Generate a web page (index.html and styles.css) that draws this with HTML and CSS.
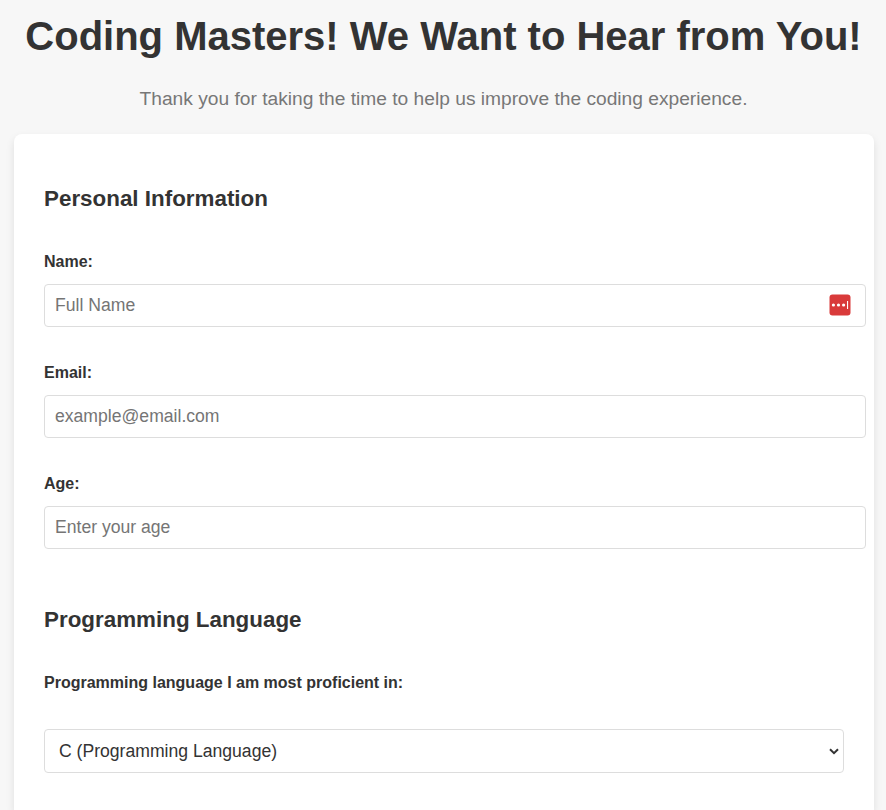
FILE: index.html
```html
<!DOCTYPE html>
<html lang="en">
<head>
<meta charset="utf-8">
<title>Coding Masters Survey</title>
<link rel="stylesheet" href="styles.css">
</head>
<body>
<header>
<h1>Coding Masters! We Want to Hear from You!</h1>
<p class="intro">Thank you for taking the time to help us improve the coding experience.</p>
</header>
<form class="survey">
<h2>Personal Information</h2>
<label for="name">Name:</label>
<div class="field">
<input id="name" type="text" placeholder="Full Name">
<svg class="badge" viewBox="0 0 22 22" width="22" height="22"><rect x=".5" y=".5" width="21" height="21" rx="3" fill="#d93a3a"/><g fill="#fff"><circle cx="4.4" cy="11" r="1.6"/><circle cx="9.5" cy="11" r="1.6"/><circle cx="14.6" cy="11" r="1.6"/><rect x="18" y="7" width="1.1" height="8"/></g></svg>
</div>
<label for="email">Email:</label>
<div class="field"><input id="email" type="text" placeholder="example@email.com"></div>
<label for="age">Age:</label>
<div class="field"><input id="age" type="text" placeholder="Enter your age"></div>
<h2 class="language">Programming Language</h2>
<label for="lang">Programming language I am most proficient in:</label>
<div class="picker">
<select id="lang"><option>C (Programming Language)</option></select>
<svg class="chevron" viewBox="0 0 10 7" width="10" height="7"><path d="M1 1.3 5 5.2 9 1.3" fill="none" stroke="#333" stroke-width="2"/></svg>
</div>
</form>
</body>
</html>
```
FILE: styles.css
```css
* { box-sizing: border-box; }
html, body { height: 100%; overflow: hidden; }
body { display: flex; flex-direction: column; margin: 0; background: #f7f7f7; color: #333; font-family: "Liberation Sans", Arial, sans-serif; }
h1 { margin: 0; padding: 13px 0 0 1px; font-size: 40px; line-height: 46px; text-align: center; white-space: nowrap; }
.intro { margin: 29px 0 0; padding-left: 1px; font-size: 19.2px; line-height: 22px; text-align: center; color: #777; }
.survey { flex: 1; width: 860px; margin: 24px 0 0 14px; padding: 52px 30px 0; background: #fff; border-radius: 8px 8px 0 0; box-shadow: 0 4px 8px rgba(0, 0, 0, .1); }
h2 { margin: 0 0 40px; font-size: 22.4px; line-height: 26px; }
label { display: block; margin-bottom: 12px; font-size: 16px; line-height: 20px; font-weight: bold; }
.field { position: relative; width: 822px; height: 43px; margin-bottom: 36px; }
input { display: block; width: 100%; height: 43px; padding: 0 10px; border: 1px solid #ddd; border-radius: 4px; font: 17.6px "Liberation Sans", Arial, sans-serif; }
input::placeholder { color: #757575; }
.badge { position: absolute; right: 15px; top: 10px; }
.language { margin-top: 58px; }
.picker { position: relative; width: 800px; margin-top: 36px; }
select { display: block; appearance: none; width: 100%; height: 44px; padding: 0 14px; border: 1px solid #ddd; border-radius: 4px; background: #fff; color: #333; font: 17.6px "Liberation Sans", Arial, sans-serif; }
.chevron { position: absolute; right: 5px; top: 19px; }
```
